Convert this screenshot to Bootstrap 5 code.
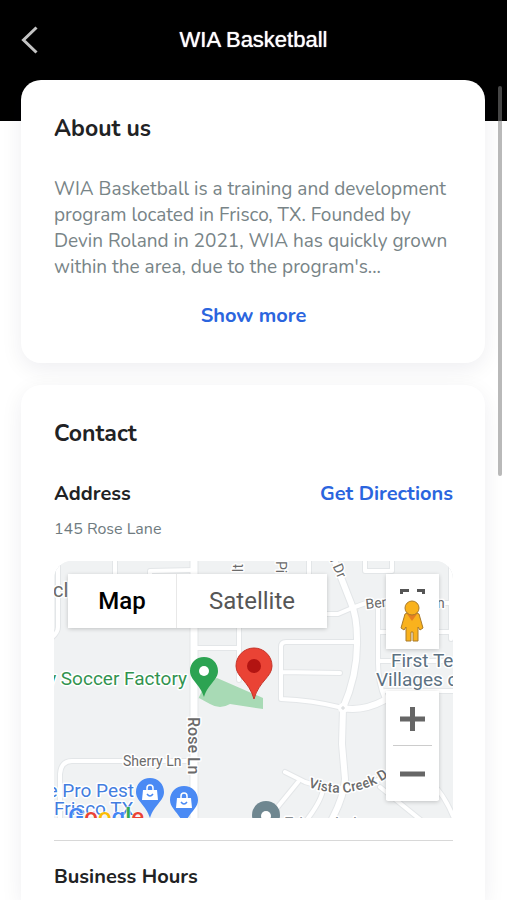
<!DOCTYPE html>
<html lang="en">
<head>
<meta charset="utf-8">
<meta name="viewport" content="width=device-width, initial-scale=1">
<title>WIA Basketball</title>
<link href="https://cdn.jsdelivr.net/npm/bootstrap@5.3.0/dist/css/bootstrap.min.css" rel="stylesheet">
<style>
body{font-family:Nunito,Lato,sans-serif;color:#212224;background:#fff}
.app-bar{background:#000;height:121px;padding:0 21px}
.bar-row{height:80px}
.bar-row h1{font:400 22px/26px "Liberation Sans",Arial,sans-serif;text-shadow:0 0 1px #fff}
.back-btn{width:20px;height:32px}
.page-main{margin-top:-41px;padding:0 22px 0 21px;gap:22px}
.panel{background:#fff;border-radius:20px;padding:33px 32px 33px 33px;box-shadow:0 6px 22px rgba(20,20,60,.07)}
.panel-open{border-radius:20px 20px 0 0}
.panel h2{font-size:23px;line-height:32px;font-weight:700}
.panel h3{font-size:20px;line-height:28px;font-weight:700}
.about-text{font-size:19px;line-height:26px;color:#788487;margin-top:31px;margin-bottom:22px}
.text-action{font-size:20px;line-height:28px;font-weight:700;color:#2b65de;text-decoration:none}
.address-row{margin-top:30px}
.street{font-size:16px;line-height:24px;color:#6f7b80;margin:9px 0 20px}
.map-box{height:257px;border-radius:18px 18px 0 0;background:#f0f2f3;font-family:Roboto,sans-serif}
.map-ctl{background:#fff;box-shadow:0 1px 4px rgba(0,0,0,.2);border-radius:2px}
.map-ctl button{background:#fff;border:0;padding:0}
.type-ctl{top:13px;left:14px;height:54px}
.type-ctl button{font-size:24px;line-height:28px;color:#565656}
.type-ctl .is-on{width:109px;font-weight:500;color:#000;border-right:1px solid #e8e8e8}
.type-ctl .is-off{width:150px}
.view-ctl{top:13px;right:14px;width:53px;height:75px}
.zoom-ctl{top:130px;right:14px;width:53px;height:110px}
.zoom-ctl button{height:54px}
.zoom-ctl hr{margin:0 7px;color:#ccc;opacity:1}
.rule{margin:22px 0;color:#d8d8d8;opacity:1}
.scroll-thumb{top:86px;right:5px;width:4px;height:390px;border-radius:2px;background:rgba(128,128,128,.55)}
</style>
<script src="https://cdn.jsdelivr.net/npm/bootstrap@5.3.0/dist/js/bootstrap.bundle.min.js"></script>
</head>
<body class="position-relative">
<div class="d-flex flex-column min-vh-100">
<header class="app-bar text-white">
  <div class="bar-row d-flex align-items-center">
    <button class="back-btn btn p-0 border-0 d-flex" aria-label="Back"><svg width="20" height="32" fill="none" stroke="#c4c4c4" stroke-width="3"><path d="M15.500 3.500L2.500 16L15.500 28.500"/></svg></button>
    <h1 class="flex-grow-1 text-center m-0">WIA Basketball</h1>
    <span class="back-btn"></span>
  </div>
</header>
<main class="page-main d-flex flex-column flex-grow-1">
  <section class="panel">
    <h2 class="m-0">About us</h2>
    <p class="about-text">WIA Basketball is a training and development program located in Frisco, TX. Founded by Devin Roland in 2021, WIA has quickly grown within the area, due to the program's...</p>
    <div class="d-flex justify-content-center"><a class="text-action" href="#">Show more</a></div>
  </section>
  <section class="panel panel-open flex-grow-1 pb-2">
    <h2 class="m-0">Contact</h2>
    <div class="address-row d-flex justify-content-between align-items-center">
      <h3 class="m-0">Address</h3>
      <a class="text-action" href="#">Get Directions</a>
    </div>
    <p class="street">145 Rose Lane</p>
    <div class="map-box position-relative overflow-hidden">
      <svg class="d-block" width="100%" height="257" viewBox="54 562 399 257" preserveAspectRatio="xMidYMid slice" role="img" aria-label="Map of 145 Rose Lane">
        <defs>
          <g id="roads" fill="none" stroke-linejoin="round" stroke-linecap="round">
            <path d="M58 560V628Q58 634 50 640M115 560V580M150 576V572L194 571M194 649H239M239 625V681M309 560V580M365 560V572H392V560"/>
            <path d="M325 615H338L352 609L366 604H456M357 643H286Q281 643 281 648V700Q312 701 343 709M281 673L340 674M378 605V664Q378 684 385 700M378 633H455M378 662H455M385 692H455M451 560V640"/>
            <path d="M60 822V775Q61 762 72 762H191M285 773L305 783Q345 797 385 778M298 783L276 810M323 790Q322 801 306 822M380 788L422 822M432 784Q446 798 455 822"/>
          </g>
          <g id="mainroads" fill="none" stroke-linecap="round" stroke-linejoin="round">
            <path d="M333 558L351 604Q357 617 357 640Q358 675 343 709L342 745L345 780Q344 798 331 822M343 709Q362 713 385 701"/>
          </g>
          <path id="pin" d="M0-14C-8-14-14-8-14 0C-14 9-4 13 0 26C4 13 14 9 14 0C14-8 8-14 0-14Z"/>
          <path id="creek" d="M308 788Q350 803 388 778"/>
        </defs>
        <rect x="54" y="562" width="399" height="257" fill="#f0f2f3"/>
        <path d="M198 700L206 684L217 679L263 699V710L230 705Q220 711 210 705L199 699Z" fill="#a8dab5"/>
        <use href="#roads" stroke="#e3e6e8" stroke-width="6"/><use href="#mainroads" stroke="#e3e6e8" stroke-width="8"/>
        <path d="M194 562V819" stroke="#e3e6e8" stroke-width="9"/>
        <use href="#roads" stroke="#fff" stroke-width="4"/><use href="#mainroads" stroke="#fff" stroke-width="6"/>
        <path d="M194 562V819" stroke="#fff" stroke-width="7"/>
        <circle cx="343" cy="709" r="5" fill="#fff"/><path d="M341 709H345M343 707V711" stroke="#d3d6d8"/>
        <g fill="#6b6b6b" stroke="#fff" stroke-width="3" paint-order="stroke" stroke-linejoin="round">
          <text x="53" y="598" font-size="20">cl</text>
          <text transform="translate(188 718) rotate(90)" font-size="16" font-weight="500">Rose Ln</text>
          <text x="123" y="767" font-size="14">Sherry Ln</text>
          <text transform="translate(243 573) rotate(-90)" font-size="14">lt</text>
          <text transform="translate(276 562) rotate(90)" font-size="14">Pi</text>
          <text transform="translate(328 557) rotate(66)" font-size="14">n Dr</text>
          <text transform="translate(366 610) rotate(-6)" font-size="14">Ber</text>
          <text x="437" y="609" font-size="14">n</text>
          <text font-size="14" font-weight="500"><textPath href="#creek">Vista Creek D</textPath></text>
          <text x="284" y="830" font-size="17" fill="#8a8f93">Frisco Lak</text>
          <g font-size="19"><text x="187" y="686" text-anchor="end" fill="#32934f">y Soccer Factory</text>
          <g fill="#5c7182"><text x="391" y="668">First Te</text><text x="376" y="687">Villages c</text></g>
          <g fill="#437de0"><text x="134" y="798" text-anchor="end">e Pro Pest</text><text x="54" y="816">Frisco TX</text></g></g>
        </g>
        <text x="68" y="826" font-size="24" font-weight="500" stroke="#fff" stroke-width="1" paint-order="stroke"><tspan fill="#4285f4">G</tspan><tspan fill="#ea4335">o</tspan><tspan fill="#fbbc05">o</tspan><tspan fill="#4285f4">g</tspan><tspan fill="#34a853">l</tspan><tspan fill="#ea4335">e</tspan></text>
        <use href="#pin" x="204" y="672" fill="#2ca352"/><circle cx="204" cy="672" r="5" fill="#fff"/>
        <g transform="translate(254 667)"><path d="M0-18C-10-18-18-10-18 0C-18 11-5 15 0 33C5 15 18 11 18 0C18-10 10-18 0-18Z" fill="#ea4335" stroke="#c5352a"/><circle r="7" fill="#b31412"/></g>
        <g fill="#4a8af4"><use href="#pin" x="150" y="793"/><use href="#pin" x="184" y="801"/></g>
        <g id="bag" transform="translate(150 794)"><path d="M-7-3H7L8 7H-8Z" fill="#fff"/><path d="M-3-3V-5Q-3-8 0-8Q3-8 3-5V-3" fill="none" stroke="#fff" stroke-width="1.500"/><path d="M-3 1Q0 5 3 1" fill="none" stroke="#4a8af4" stroke-width="1.500"/></g>
        <use href="#bag" x="34" y="8"/>
        <circle cx="266" cy="816" r="14" fill="#6f8790"/><circle cx="266" cy="817" r="5" fill="#fff"/>
      </svg>
      <div class="map-ctl type-ctl position-absolute d-flex"><button class="is-on">Map</button><button class="is-off">Satellite</button></div>
      <div class="map-ctl view-ctl position-absolute">
        <button class="w-100 h-100 d-block" aria-label="Street View"><svg class="d-block" width="53" height="75" fill="none"><path d="M15.500 20V16.500H23M31 16.500H37.500V20" stroke="#555" stroke-width="3"/><g fill="#f9b21d" stroke="#a97a2a"><path d="M19 40Q26 36 33 40L37 54L34 56L32 53V67H27V58H25V67H20V53L18 56L15 54Z"/><path d="M21 40L26 47L31 40Z" fill="#e57f22" stroke="none"/><circle cx="26" cy="34" r="7"/></g></svg></button>
      </div>
      <div class="map-ctl zoom-ctl position-absolute">
        <button class="w-100 d-block" aria-label="Zoom in"><svg class="d-block" width="53" height="54" stroke="#666" stroke-width="5"><path d="M14 28H39M26.500 16V40"/></svg></button><hr>
        <button class="w-100 d-block" aria-label="Zoom out"><svg class="d-block" width="53" height="54" stroke="#666" stroke-width="5"><path d="M14 28H39"/></svg></button>
      </div>
    </div>
    <hr class="rule">
    <h3 class="m-0">Business Hours</h3>
  </section>
</main>
</div>
<div class="scroll-thumb position-absolute" aria-hidden="true"></div>
</body>
</html>
